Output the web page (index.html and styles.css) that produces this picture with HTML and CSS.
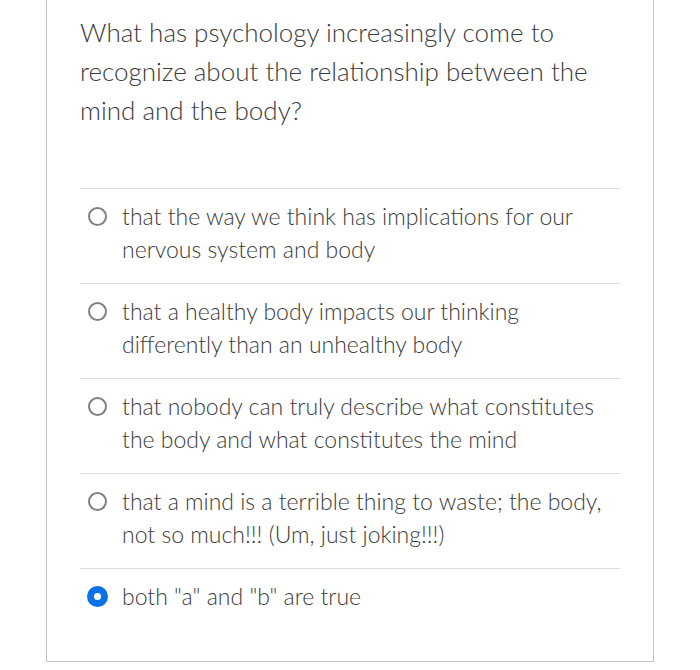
FILE: index.html
```html
<!DOCTYPE html>
<html>
<head>
<meta charset="utf-8">
<link rel="stylesheet" href="styles.css">
</head>
<body>
<div class="card">
  <div class="question">What has psychology increasingly come to recognize about the relationship between the mind and the body?</div>
  <div class="options">
    <div class="option"><span class="radio"></span><span class="label">that the way we think has implications for our nervous system and body</span></div>
    <div class="option"><span class="radio"></span><span class="label">that a healthy body impacts our thinking differently than an unhealthy body</span></div>
    <div class="option"><span class="radio"></span><span class="label">that nobody can truly describe what constitutes the body and what constitutes the mind</span></div>
    <div class="option"><span class="radio"></span><span class="label">that a mind is a terrible thing to waste; the body, not so much!!! (Um, just joking!!!)</span></div>
    <div class="option"><span class="radio checked"></span><span class="label">both "a" and "b" are true</span></div>
  </div>
</div>
</body>
</html>
```
FILE: styles.css
```css
html, body {
  margin: 0;
  padding: 0;
  background: #fff;
}
body {
  font-family: Lato, "Liberation Sans", sans-serif;
  color: #3b3b3b;
}
.card {
  margin-left: 46px;
  width: 608px;
  height: 662px;
  border: 1px solid #c4c4c4;
  border-top: none;
  padding: 13px 33px 0 33px;
  box-sizing: border-box;
}
.question {
  font-size: 26px;
  line-height: 39px;
  width: 539px;
  font-weight: 300;
}
.options {
  margin-top: 58px;
}
.option {
  border-top: 1px solid #dcdcdc;
  display: flex;
  align-items: flex-start;
  padding: 11px 0 17px 8px;
  gap: 15px;
}
.radio {
  flex: none;
  width: 19px;
  height: 19px;
  box-sizing: border-box;
  border: 2px solid #808080;
  border-radius: 50%;
  margin-top: 7px;
}
.radio.checked {
  width: 21px;
  height: 21px;
  margin-left: -1px;
  margin-right: -1px;
  margin-top: 6px;
  border: 7px solid #0a72e6;
}
.label {
  font-size: 23px;
  line-height: 33px;
  font-weight: 300;
  width: 487px;
}
```
